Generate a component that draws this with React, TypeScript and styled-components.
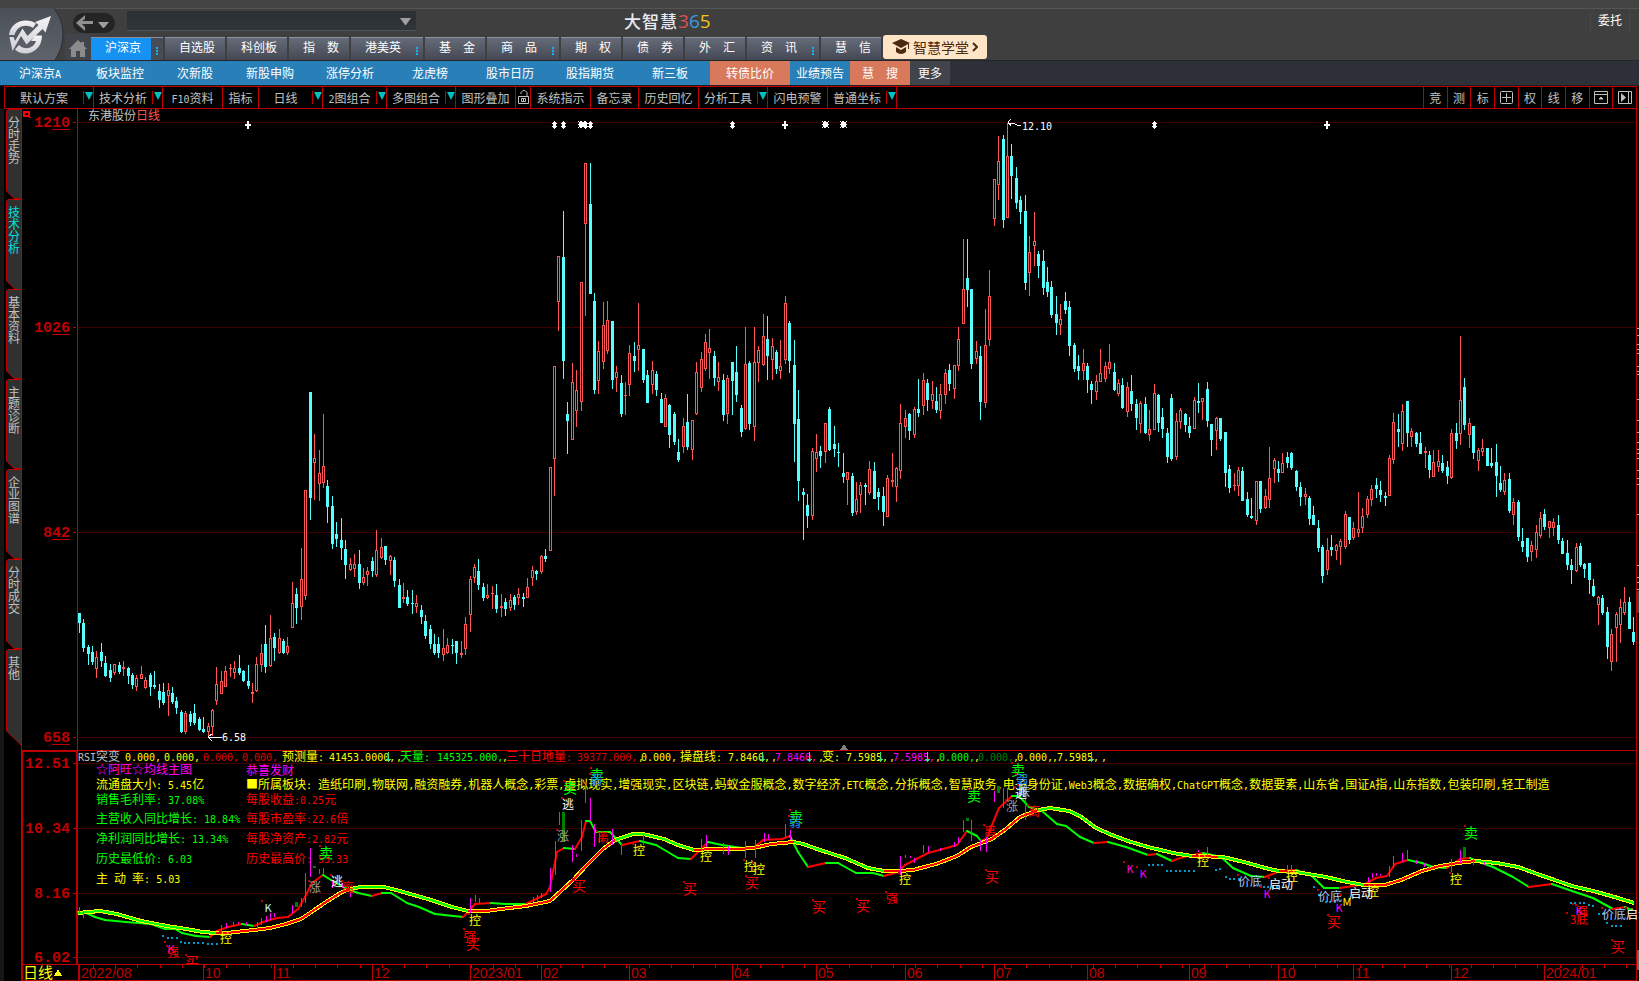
import React from "react";
import styled, { createGlobalStyle, css } from "styled-components";

const CJK = '"Noto Sans CJK SC", "Liberation Sans", sans-serif';
const MONO = '"DejaVu Sans Mono", monospace';
const RED = "#c00000";

const GlobalStyle = createGlobalStyle`
  *, *::after { box-sizing: border-box; }
  body { margin: 0; background: #000; font: 12px/16px ${CJK}; color: #fff; }
  button { font: inherit; color: inherit; background: none; border: 0; padding: 0; margin: 0; cursor: pointer; white-space: pre; }
  svg { display: block; }
`;

/* ---------- mixed Chinese / latin text ---------- */

const runs = (s: string) => s.match(/[\x20-\x7e]+|[^\x20-\x7e]+/g) || [];
const isLatin = (s: string) => /^[\x20-\x7e]/.test(s);

const Latin = styled.span`
  font: 10px/12px ${MONO};
`;

const Mixed = ({ children }: { children: string }) => (
  <span>{runs(children).map((r, i) => (isLatin(r) ? <Latin key={i}>{r}</Latin> : r))}</span>
);

const PlotText = styled.text`
  font: 12px ${CJK};
  white-space: pre;
  tspan.latin { font: 10px ${MONO}; }
`;

const Label = ({ x, y, fill, children }: { x: number; y: number; fill: string; children: string }) => (
  <PlotText x={x} y={y} fill={fill}>
    {runs(children).map((r, i) => (isLatin(r) ? <tspan className="latin" key={i}>{r}</tspan> : r))}
  </PlotText>
);

/* ---------- header ---------- */

const Page = styled.div`
  display: flex;
  flex-direction: column;
  min-height: 100vh;
`;

const Header = styled.header`
  display: flex;
  height: 61px;
  border-top: 8px solid #434343;
  border-bottom: 1px solid #232529;
  background: #3f3f3f;
  box-shadow: inset 0 1px #555;
`;

const Logo = styled.div`
  flex: none;
  width: 65px;
`;

const HeaderBody = styled.div`
  flex: 1;
  display: flex;
  flex-direction: column;
`;

const TitleRow = styled.div`
  display: flex;
  height: 26px;
  padding-left: 8px;
`;

const BackPill = styled.button`
  display: flex;
  width: 42px;
  height: 20px;
  margin: 5px 12px 0 0;
  border-radius: 10px;
  background: #242424;
`;

const CodeSelect = styled.select`
  appearance: none;
  width: 289px;
  height: 20px;
  margin-top: 3px;
  border: 0;
  border-bottom: 1px solid #4f565b;
  background: linear-gradient(#2b3034, #2f3438);
  color: #ddd;
`;

const SelectWrap = styled.div`
  position: relative;
  svg { position: absolute; right: 5px; top: 10px; pointer-events: none; }
`;

const Brand = styled.div`
  margin-left: 208px;
  padding-top: 1px;
  font: 500 17px/24px ${CJK};
  letter-spacing: 1px;
  color: #e6eaf2;
  span { font: 19px/24px "Open Sans", sans-serif; letter-spacing: 0; }
`;

const Digit = styled.span<{ $c: string }>`
  color: ${(p) => p.$c};
`;

const Entrust = styled.button`
  width: 40px;
  height: 24px;
  margin: 0 9px 0 auto;
  border: solid #484848;
  border-width: 0 1px;
`;

const TabRow = styled.nav`
  display: flex;
  align-items: flex-end;
  height: 26px;
  gap: 2px;
`;

const Home = styled.button`
  width: 26px;
  height: 26px;
  margin-right: -2px;
  background: #41454b;
`;

const Tab = styled.button<{ $more?: boolean; $active?: boolean }>`
  display: flex;
  align-items: center;
  justify-content: space-between;
  width: ${(p) => (p.$more ? 72 : 60)}px;
  height: 23px;
  padding: 0 5px 4px 14px;
  border-top: 1px solid #8b909c;
  background: ${(p) =>
    p.$active
      ? "linear-gradient(90deg, #1592f2 60px, #474c57 60px)"
      : "linear-gradient(#666b79, #434853)"};
`;

const Dots = styled.i`
  width: 2px;
  height: 8px;
  margin-top: 7px;
  background: repeating-linear-gradient(#12b4f5 0 2px, transparent 2px 3px);
`;

const School = styled.button`
  display: flex;
  align-items: center;
  gap: 3px;
  width: 104px;
  height: 24px;
  padding-left: 9px;
  margin-bottom: 1px;
  border-radius: 3px;
  background: #fde5c6;
  color: #4c2a12;
  font-size: 14px;
`;

/* ---------- blue navigation ---------- */

const SubNav = styled.nav`
  display: flex;
  height: 25px;
  background: #2d3036;
  border-bottom: 1px solid #1c1e22;
`;

type Tone = "blue" | "orange" | "grey";
const TONES: Record<Tone, string> = { blue: "#2980b9", orange: "#d9795b", grey: "#41454b" };

const SubLink = styled.a<{ $w: number; $tone: Tone }>`
  width: ${(p) => p.$w}px;
  line-height: 24px;
  text-align: center;
  text-decoration: none;
  white-space: pre;
  color: #fff;
  background: ${(p) => TONES[p.$tone]};
`;

/* ---------- toolbar ---------- */

const Toolbar = styled.div`
  display: flex;
  justify-content: space-between;
  height: 23px;
  margin-left: 4px;
  margin-right: 2px;
  border: 1px solid ${RED};
  background: #000;
  color: #c0c0c0;
`;

const ToolGroup = styled.div`
  display: flex;
`;

const Tool = styled.button<{ $w: number; $drop?: boolean }>`
  display: flex;
  align-items: center;
  justify-content: center;
  width: ${(p) => p.$w}px;
  border-right: 1px solid ${RED};
  ${(p) => p.$drop && css`
    > span { flex: 1; text-align: center; }
  `}
`;

const DropMark = styled.i`
  flex: none;
  width: 10px;
  height: 13px;
  border-left: 1px solid ${RED};
  &::after {
    content: "";
    display: block;
    width: 8px;
    margin: 1px 0 0 1px;
    border: solid transparent;
    border-width: 8px 4px 0;
    border-top-color: #00c0c0;
  }
`;

const QuickGroup = styled.div`
  display: flex;
  width: 213px;
  border-left: 1px solid ${RED};
`;

const Quick = styled.button`
  flex: 1;
  display: flex;
  align-items: center;
  justify-content: center;
  & + & { border-left: 1px solid ${RED}; }
`;

/* ---------- work area ---------- */

const Work = styled.main`
  display: flex;
`;

const Rail = styled.nav`
  flex: none;
  width: 22px;
  padding-left: 2px;
  border-left: 4px solid #161616;
  border-right: 1px solid ${RED};
`;

const RailTab = styled.button<{ $active?: boolean; $last?: boolean }>`
  position: relative;
  display: block;
  width: 15px;
  height: ${(p) => (p.$last ? 98 : 90)}px;
  color: ${(p) => (p.$active ? "#00e0e0" : "#c0c0c0")};
  svg { position: absolute; left: 0; top: 0; overflow: visible; }
`;

const RailText = styled.span`
  position: absolute;
  left: 2px;
  top: 7px;
  width: 12px;
  line-height: 12px;
  white-space: normal;
`;

const Charts = styled.div`
  flex: 1;
  min-width: 0;
  svg { width: 100%; height: auto; shape-rendering: crispEdges; }
`;

const ScaleText = styled.text`
  font: bold 15px "Liberation Mono", monospace;
  fill: ${RED};
  text-anchor: end;
`;

const DateText = styled.text`
  font: 14px "Liberation Sans", sans-serif;
  fill: ${RED};
`;

const Mark = styled.text<{ $size: number }>`
  font: ${(p) => p.$size}px ${CJK};
  text-anchor: middle;
`;

/* ---------- data ---------- */

const TABS: [string, boolean?][] = [
  ["沪深京", true], ["自选股"], ["科创板"], ["指　数"], ["港美英", true], ["基　金"], ["商　品", true],
  ["期　权"], ["债　券"], ["外　汇"], ["资　讯", true], ["慧　信"],
];

const LINKS: [string, number, Tone][] = [
  ["沪深京A", 80, "blue"], ["板块监控", 80, "blue"], ["次新股", 70, "blue"], ["新股申购", 80, "blue"],
  ["涨停分析", 80, "blue"], ["龙虎榜", 80, "blue"], ["股市日历", 80, "blue"], ["股指期货", 80, "blue"],
  ["新三板", 80, "blue"], ["转债比价", 80, "orange"], ["业绩预告", 60, "blue"], ["慧　搜", 60, "orange"],
  ["更多", 40, "grey"],
];

const TOOLS: [string, number, boolean?][] = [
  ["默认方案", 89, true], ["技术分析", 69, true], ["F10资料", 60], ["指标", 36], ["日线", 64, true],
  ["2图组合", 64, true], ["多图组合", 69, true], ["图形叠加", 60], ["lock", 15], ["系统指示", 60],
  ["备忘录", 48], ["历史回忆", 60], ["分析工具", 69, true], ["闪电预警", 60], ["普通坐标", 69, true],
];

const RAIL = ["分时走势", "技术分析", "基本资料", "主题诊断", "企业图谱", "分时成交", "其他"];

/* Candle tapes: colour (r up, c down), x, high, body top, body bottom, low, in thirds of a plot unit. */
const TAPES: { x: number; y: number; bars: string }[] = [
  {
    x: 70, y: 380,
    bars: `c28 699 699 729 759;c40 717 729 804 816;c55 795 801 822 855;c67 798 816 846 855;r79 813 831 867 894;c94 789 816 843 861;c106 828 849 888 891;c121 852 870 894 906;r133 852 852 879 885;c148 846 855 876 882;r160 843 861 867 888;c175 861 864 888 912;c187 879 885 915 927;r199 885 894 921 933;r214 858 882 897 897;r226 891 900 924 927;c241 879 885 921 948;c253 873 915 921 927;c268 912 933 960 984;c280 909 936 969 975;r295 909 930 948 1008;c307 921 939 966 972;c319 951 963 984 1002;c334 990 996 1056 1059;r346 993 999 1056 1062;c361 993 1002 1026 1038;c373 972 999 1029 1035;c388 1011 1017 1050 1053;c400 1011 1047 1056 1059;r415 1029 1038 1056 1072;r427 987 990 1041 1068;r439 861 912 963 975;r454 873 903 942 942;r466 858 873 921 921;r481 852 864 867 891;r493 843 864 879 897;c508 825 864 879 885;c520 870 873 903 906;c535 855 903 918 927;r547 909 936 942 969;r559 831 852 933 936;r574 792 819 855 876;c586 735 792 861 879;r601 705 774 858 861;c613 759 771 804 843;r628 747 774 819 822;c640 777 783 819 822;r652 771 798 819 825;r667 606 669 744 744;c679 624 642 684 732;r694 504 597 681 720;r706 330 330 648 660;c721 36 36 354 420;r733 162 234 249 360;r748 210 279 312 363;r760 102 258 309 324;c772 300 318 381 429;c787 348 378 492 507;c799 426 462 477 501;c814 414 480 504 540;c826 480 507 555 597;r841 534 552 570 573;r853 522 552 567 591;c868 510 552 609 627;r880 564 591 609 615;r892 561 573 585 618;c907 531 543 573 591;r919 450 510 585 591;r934 474 501 534 537;c946 498 498 540 555;r961 525 528 543 585;c973 531 540 603 621;c988 597 615 684 684;r1000 609 651 657 669;c1012 630 651 672 678;c1027 630 669 672 702;r1039 645 669 681 699;c1054 675 690 711 732;c1066 705 723 768 777;c1081 735 747 792 807;c1093 762 792 819 825;c1105 771 792 819 834;r1120 747 804 825 843;r1132 774 795 819 822;c1147 777 795 798 822;c1159 783 783 819 852;r1174 783 819 825 834;r1186 711 732 807 825;r1201 588 597 705 756;r1213 552 561 594 609;c1225 537 573 615 630;c1240 609 621 654 663;r1252 612 645 654 657;r1267 618 639 642 687;c1279 612 645 687 699;r1294 642 678 684 711;c1306 654 666 687 708;r1321 642 660 684 693;c1333 645 651 675 690;r1345 624 642 654 675;c1360 639 651 657 681;r1372 594 621 654 654;r1387 558 570 594 618;c1399 570 573 582 600;r1414 525 528 576 582;c1426 507 528 537 546`,
  },
  {
    x: 500, y: 110,
    bars: `r151 1072 1072 1322 1322;r163 768 768 1047 1158;r175 438 438 576 663;c190 303 441 753 807;c202 876 912 933 1032;r217 759 816 990 990;r229 780 840 903 951;r244 516 516 876 903;r256 159 159 342 618;c271 159 282 552 552;c283 549 573 840 852;r295 693 723 813 852;r310 576 645 756 777;r322 573 630 723 732;c337 633 633 810 837;r349 768 786 804 846;c364 795 819 912 921;r376 816 855 858 915;r388 705 729 825 858;c403 696 738 753 786;r415 579 705 720 783;c430 717 717 810 819;c442 780 795 879 879;r457 753 780 825 852;c469 783 792 840 858;c484 849 867 939 939;r496 852 864 951 951;c508 882 885 975 1014;c523 906 912 996 1005;c535 987 1026 1050 1056;r550 924 948 1011 1029;c562 852 936 1011 1020;r577 930 930 1020 1050;r589 756 786 912 915;r604 726 747 834 846;r616 672 696 777 783;r628 657 714 729 807;c643 723 738 804 828;r655 756 801 816 843;c670 792 810 915 933;r682 795 804 912 942;c697 756 756 813 915;c709 708 786 855 876;c724 885 894 966 981;r736 651 762 957 960;c748 753 759 942 960;r763 651 756 951 993;r775 708 720 759 816;r790 612 678 765 768;c802 618 687 738 810;r817 684 708 750 810;c829 720 726 777 792;r841 690 768 783 807;r856 558 579 750 762;c868 633 639 753 789;c883 690 765 942 1056;c895 840 927 1113 1173;c910 1134 1146 1155 1290;c922 1152 1185 1218 1254;r937 1014 1023 1218 1230;r949 972 1026 1047 1086;c961 1008 1023 1038 1074;r976 939 939 1026 1059;c988 891 897 1020 1023;c1003 948 1002 1017 1041;c1015 999 1026 1029 1071;c1030 1029 1089 1101 1119;r1042 1086 1086 1110 1185;c1057 1089 1098 1209 1218;r1069 1116 1167 1206 1215;r1081 1116 1125 1155 1209;c1096 1119 1125 1131 1185;r1108 1053 1077 1149 1155;c1123 1056 1083 1167 1167;c1135 1134 1146 1161 1200`,
  },
  {
    x: 880, y: 110,
    bars: `c10 1131 1158 1206 1248;r22 1095 1104 1221 1221;r37 1029 1110 1116 1131;r49 1071 1074 1131 1176;r61 882 939 1083 1107;r76 900 924 951 984;c88 909 912 963 990;r103 891 897 975 984;c115 807 897 909 921;r130 789 810 888 915;c142 807 819 870 903;r157 813 852 873 897;c169 831 873 900 909;r181 822 852 903 927;r196 777 789 855 882;c208 762 780 822 843;r223 765 765 837 867;r235 651 687 768 783;r250 387 537 642 642;c262 387 504 540 591;c274 537 537 762 777;r289 693 723 747 762;c301 708 738 876 930;r316 597 705 879 894;r328 480 558 690 708;r343 207 207 327 348;r355 78 153 225 270;c370 75 87 330 354;r382 38 138 324 324;c394 102 138 198 267;c409 171 204 279 297;c421 258 270 306 342;c436 255 303 519 540;r448 378 426 489 558;r463 306 393 408 468;c475 423 432 468 504;c490 420 453 534 555;c502 471 516 546 561;c514 513 531 615 624;c529 558 612 639 675;r541 582 627 645 675;c556 546 573 600 612;c568 573 591 708 738;c583 699 705 777 786;c595 735 768 783 810;r610 717 759 783 810;c622 759 768 810 849;c634 813 822 840 882;r649 795 813 846 870;r661 717 789 816 816;r676 756 768 807 816;r688 702 756 777 792;c703 759 786 840 843;r715 807 819 852 858;c727 804 825 894 897;r742 816 831 906 921;c754 795 843 882 903;c769 867 882 924 960;r781 873 879 942 969;c796 861 882 969 972;r808 900 957 975 993;r823 822 849 960 960;c835 852 855 939 966;c847 894 921 957 984;c862 954 969 1041 1059;c874 852 864 1047 1053;r889 909 933 1041 1050;r901 894 900 936 957;c916 909 912 945 966;c928 921 948 969 984;r943 861 870 957 957;c955 819 873 879 909;r967 864 864 876 930;c982 816 837 933 951;c994 942 942 990 1038;r1009 921 924 963 1020;c1021 924 924 987 993;c1036 966 966 1089 1131;c1048 1065 1077 1134 1149;r1063 1089 1125 1128 1143;r1075 1071 1080 1128 1158`,
  },
  {
    x: 1240, y: 320,
    bars: `c7 441 453 543 543;c22 516 537 585 591;c34 534 588 594 597;r49 483 483 603 615;c61 483 483 567 579;r76 507 528 564 567;r88 381 474 540 564;r103 414 420 447 489;c115 423 447 459 486;r127 399 429 459 459;c142 396 411 429 444;c154 396 399 444 450;c169 450 453 501 513;c181 486 501 531 558;r196 504 522 531 555;c208 528 534 597 615;c220 558 585 615 615;c235 600 624 684 696;c247 675 681 768 789;r262 654 690 750 765;c274 645 681 690 708;r289 672 675 693 720;r301 657 663 681 735;r316 573 582 681 687;c328 591 591 660 672;r340 606 624 654 660;r355 516 627 639 651;r367 564 588 624 639;r382 528 537 585 594;r394 495 507 540 558;c409 474 495 507 534;c421 483 510 525 546;c436 516 528 534 558;r448 405 414 528 528;r460 279 306 420 432;c475 282 327 336 381;r487 252 273 372 393;c502 243 243 339 381;r514 324 333 351 381;c529 336 339 372 381;c541 336 369 402 402;r556 381 393 399 444;c568 393 405 450 474;r580 390 426 471 471;r595 390 423 441 456;c607 405 429 453 459;c622 423 441 468 492;r634 327 339 474 477;c649 309 339 363 387;r661 48 240 342 375;c673 174 201 315 330;r688 294 309 345 384;c700 318 318 399 417;r715 384 390 423 453;r727 357 384 396 408;c742 384 384 438 438;c754 384 429 438 444;c769 372 426 468 531;c781 438 489 510 516;r793 459 480 516 525;c808 459 477 573 579;r820 534 546 585 615;c835 540 546 651 663;c847 624 663 681 696;c862 654 654 711 726;r874 663 675 696 723;r889 615 636 690 714;r901 576 594 648 654;c913 567 582 621 630;r928 603 603 624 654;r940 594 606 624 648;c955 585 615 660 672;c967 654 663 702 702;c982 660 699 735 750;c994 717 735 750 792;r1009 669 681 753 756;c1021 669 678 735 741;c1033 729 732 747 774;c1048 729 729 780 822;c1060 777 798 828 831;r1075 828 831 855 915;c1087 825 834 879 885;c1102 861 876 981 1017;r1114 927 942 1026 1053;r1129 876 882 924 1026;r1141 837 861 915 969;r1153 801 846 879 885;c1168 831 846 927 927;c1180 891 936 966 975`,
  },
];

const CANDLES = TAPES.flatMap((t) =>
  t.bars.split(";").map((s) => {
    const [x, high, top, bottom, low] = s.slice(1).split(" ").map(Number);
    const py = (v: number) => t.y + Math.round(v / 3);
    return { up: s[0] === "r", x: t.x + Math.floor(x / 3), high: py(high), top: py(top), bottom: py(bottom), low: py(low) };
  })
);

/* Slow average, colour-keyed stretches. */
const SLOW: [string, string][] = [
  ["#00ff00", "78,913 100,911 117,914 141,921 167,926 186,929 203,932 216,933"],
  ["#ff0000", "216,933 226,933 245,931 270,928 286,924 301,919 310,913 326,902 342,892 350,889"],
  ["#00ff00", "350,889 361,887 384,887 396,890 414,895 431,900 452,907 468,911"],
  ["#ff0000", "468,911 486,911 501,909 526,906 550,901 561,891 573,880 586,866 603,849 615,840"],
  ["#00ff00", "615,840 633,834 643,834 664,839 678,845 694,850"],
  ["#ff0000", "694,850 715,849 736,849 754,848 771,844 794,842"],
  ["#00ff00", "794,842 803,844 820,850 845,858 868,868 884,871"],
  ["#ff0000", "884,871 900,871 913,870 936,864 957,856 971,847 992,839 1006,829 1020,817 1038,810"],
  ["#00ff00", "1038,810 1050,808 1069,811 1080,816 1096,828 1112,835 1128,841 1148,847 1173,853 1192,856"],
  ["#ff0000", "1192,856 1203,856 1218,857"],
  ["#00ff00", "1218,857 1223,857 1244,862 1269,869 1279,871"],
  ["#ff0000", "1279,871 1296,872"],
  ["#00ff00", "1296,872 1308,874 1326,877 1347,882 1364,885"],
  ["#ff0000", "1364,885 1385,885 1401,880 1422,871 1440,866 1458,863 1475,861"],
  ["#00ff00", "1475,861 1497,863 1518,867 1543,876 1572,886 1597,892 1618,898 1634,903"],
];

const FAST = "78,912 84,912 95,917 105,920 126,922 151,924 165,929 175,929 182,933 196,936 210,937 217,931 228,927 242,924 254,926 263,922 277,918 288,917 298,909 305,897 312,883 323,875 331,880 345,888 358,893 372,896 382,893 391,893 407,903 419,907 435,914 463,917 468,912 475,904 491,903 505,904 526,904 542,896 546,894 550,887 557,852 564,848 575,849 582,837 586,821 590,821 596,832 610,832 622,845 640,841 656,845 678,858 691,859 700,850 708,842 722,845 742,848 752,849 763,840 782,839 790,836 798,852 808,867 826,863 838,863 856,873 873,873 884,876 898,872 905,865 928,853 943,849 957,845 967,831 977,836 981,841 987,838 992,825 999,808 1012,796 1019,796 1029,807 1042,811 1057,824 1066,826 1080,837 1094,843 1108,842 1126,847 1148,855 1157,854 1172,861 1183,857 1203,853 1221,857 1233,868 1251,876 1265,877 1280,871 1296,870 1312,876 1324,888 1340,888 1365,884 1376,878 1387,876 1395,864 1408,860 1422,863 1433,867 1447,868 1460,859 1470,858 1479,862 1493,867 1513,877 1529,887 1552,884 1572,891 1593,898 1613,909 1625,907 1631,910"
  .split(" ")
  .map((p) => p.split(",").map(Number));

/* x, top, bottom */
const STICKS = "79 907 913,83 911 918,221 925 932,226 923 928,257 922 929,261 918 925,266 916 922,270 913 920,274 913 917,292 905 913,301 898 907,305 873 903,310 848 877,319 869 874,323 868 874,332 880 888,342 883 888,350 892 897,470 898 913,475 895 902,479 898 903,537 895 902,541 893 898,550 868 892,555 841 875,559 812 825,572 845 862,576 854 857,581 820 851,585 785 803,590 798 821,594 824 847,599 832 843,612 829 845,621 846 855,643 835 845,701 839 850,706 835 847,723 843 854,728 846 855,745 841 858,755 840 858,764 833 842,768 834 840,785 824 837,790 830 840,900 856 875,914 858 863,923 845 853,928 846 852,954 842 847,958 837 843,963 820 832,971 820 841,980 840 851,986 837 852,994 791 802,1003 788 808,1007 788 800,1025 799 820,1207 847 857,1287 865 873,1291 865 873,1368 877 882,1372 873 878,1389 866 877,1393 856 868,1402 853 862,1407 850 860,1451 859 872,1460 850 863,1473 859 865,233 922 925,238 922 924,246 922 925,533 897 902,905 855 858,910 856 858,940 848 851,1376 873 876,1380 874 876,1198 850 852,1416 860 864,1424 863 867,1429 865 869,1484 862 865"
  .split(",")
  .map((s) => s.split(" ").map(Number));

/* x, top, height */
const BLOCKS = [[313, 866, 2], [295, 902, 5], [562, 812, 30], [966, 818, 3], [997, 786, 7], [1463, 847, 11]];

/* first x, y, count */
const DOTS = [
  [162, 935, 1], [167, 937, 3], [180, 941, 1], [184, 942, 5], [207, 943, 3], [1148, 864, 4], [1166, 870, 7],
  [1215, 869, 1], [1219, 868, 1], [1225, 876, 1], [1229, 878, 3], [1263, 886, 4], [1313, 886, 1], [1318, 894, 1],
  [1325, 901, 3], [1570, 902, 4], [1588, 904, 1], [1592, 905, 1], [1598, 913, 2], [1606, 922, 1], [1611, 925, 3],
];

const MAJOR: [number, string][] = [
  [79, "2022/08"], [203, "10"], [274, "11"], [372, "12"], [470, "2023/01"], [541, "02"], [629, "03"], [732, "04"],
  [816, "05"], [905, "06"], [994, "07"], [1087, "08"], [1189, "09"], [1278, "10"], [1353, "11"], [1451, "12"],
  [1544, "2024/01"],
];

const G = "#00ff00", R = "#ff0000", Y = "#ffff00", M = "#ff00ff", W = "#ffffff", B = "#1e90ff", S = "#a0a0a0", P = "#a6c8ff";
const D = "#e00000";

const MARKS: [string, number, number, string, number?][] = [
  ["卖", 326, 853, G, 14], ["涨", 315, 888, S], ["离", 348, 888, R], ["逃", 337, 882, W], ["K", 268, 908, "#c0ffff", 11],
  ["控", 226, 939, Y], ["K", 171, 949, M, 11], ["强", 173, 953, R], ["买", 192, 962, R, 14], ["控", 475, 921, Y],
  ["强", 470, 936, R, 13], ["买", 473, 944, R, 14], ["卖", 570, 788, G, 14], ["逃", 568, 805, W], ["涨", 563, 837, S],
  ["卖", 597, 775, G, 14], ["弱", 596, 781, B], ["离", 603, 838, R], ["控", 639, 851, Y], ["买", 579, 886, R, 14],
  ["控", 706, 857, Y], ["买", 690, 889, R, 14], ["控", 750, 867, Y], ["控", 759, 870, Y], ["买", 752, 883, R, 14],
  ["卖", 796, 817, G, 14], ["弱", 795, 823, B], ["买", 819, 907, R, 14], ["买", 863, 906, R, 14], ["强", 892, 899, R],
  ["控", 905, 880, Y], ["买", 992, 877, R, 14], ["离", 990, 832, R], ["卖", 974, 796, G, 14], ["卖", 1018, 770, G, 14],
  ["弱", 1022, 781, B], ["跌", 1024, 792, P], ["逃", 1021, 794, W], ["涨", 1012, 807, S], ["离", 1034, 812, R],
  ["K", 1130, 869, M, 11], ["K", 1143, 874, M, 11], ["控", 1203, 862, Y], ["价底", 1250, 882, P], ["控", 1292, 877, Y],
  ["启动", 1281, 885, W], ["K", 1267, 894, M, 11], ["价底", 1330, 897, P], ["K", 1339, 908, M, 11], ["M", 1347, 902, Y, 11],
  ["控", 1373, 892, Y], ["启动", 1361, 894, W], ["买", 1334, 922, R, 14], ["控", 1456, 880, Y], ["卖", 1471, 833, G, 14],
  ["强", 1582, 912, R], ["K", 1579, 911, M, 11], ["3底", 1579, 920, R], ["价底", 1614, 915, P], ["启动", 1638, 915, W],
  ["买", 1618, 947, R, 14],
];

const READOUT: [number, string, string][] = [
  [78, "#c0c0c0", "RSI突变"], [125, Y, "0.000,"], [164, Y, "0.000,"], [203, D, "0.000,"], [242, D, "0.000,"],
  [282, Y, "预测量:"], [329, Y, "41453.0000,"], [400, G, "天量:"], [437, G, "145325.000,"], [506, R, "三十日地量:"],
  [577, D, "39377.000,"], [641, Y, "0.000,"], [680, Y, "操盘线:"], [728, Y, "7.8460,"], [775, M, "7.8460,"],
  [822, Y, "变:"], [846, Y, "7.5985,"], [893, M, "7.5985,"], [939, G, "0.000,"], [978, "#008000", "0.000,"],
  [1017, Y, "0.000,"], [1057, Y, "7.5985,"],
];

const FACTS: [number, number, string, string][] = [
  [96, 774, M, "☆阿旺☆均线主图"], [246, 775, M, "恭喜发财"], [96, 789, Y, "流通盘大小: 5.45亿"],
  [246, 789, Y, "■所属板块: 造纸印刷,物联网,融资融券,机器人概念,彩票,虚拟现实,增强现实,区块链,蚂蚁金服概念,数字经济,ETC概念,分拆概念,智慧政务,电子身份证,Web3概念,数据确权,ChatGPT概念,数据要素,山东省,国证A指,山东指数,包装印刷,轻工制造"],
  [96, 804, G, "销售毛利率: 37.08%"], [246, 804, R, "每股收益:0.25元"],
  [96, 823, G, "主营收入同比增长: 18.84%"], [246, 823, R, "每股市盈率:22.6倍"],
  [96, 843, G, "净利润同比增长: 13.34%"], [246, 843, R, "每股净资产:2.82元"],
  [96, 863, G, "历史最低价: 6.03"], [246, 863, R, "历史最高价: 53.33"],
  [96, 883, Y, "主 动 率: 5.03"],
];

/* ---------- drawings ---------- */

const LogoMark = () => (
  <svg width="65" height="52" viewBox="0 8 65 52">
    <defs>
      <linearGradient id="plate" x1="0" y1="0" x2="0" y2="1">
        <stop offset="0" stopColor="#4b4f56" />
        <stop offset="1" stopColor="#5f636b" />
      </linearGradient>
      <linearGradient id="steel" x1="0" y1="0" x2="0" y2="1">
        <stop offset="0" stopColor="#f4f4f6" />
        <stop offset="1" stopColor="#cfcfd6" />
      </linearGradient>
    </defs>
    <path d="M0 8H54Q63 20 63 34T55 60H0Z" fill="url(#plate)" />
    <path d="M54 8Q63 20 63 34T55 60" fill="none" stroke="#2c2e32" strokeWidth="1" />
    <g fill="url(#steel)">
      <path d="M9 35C10 26 17 20.500 26 20.500C30 20.500 33 21.500 36 23.500L33 28C26 23.500 17 26 14.500 35Z" />
      <path d="M35 22L51 16L45.500 32.500L42.500 29L26.500 44.500L21 36L12.500 51L9.500 37H13.500L15 41L22.500 28.500L27.500 36L38.500 25Z" />
      <path d="M19 45C25 51 34 48 36 41H31L35 35.500H42C42 47 34 53.500 25.500 53.500C21 53.500 17.500 52 15 49.500Z" />
    </g>
  </svg>
);

const Shot = ({ kind, x }: { kind: "plus" | "gem" | "star"; x: number }) => (
  <path
    fill="#fff"
    d={
      kind === "plus"
        ? `M${x - 1} 121h2v3h2v2h-2v3h-2v-3h-2v-2h2z`
        : kind === "gem"
        ? `M${x} 121h1v1h1v1h1v1h-1v2h1v1h-1v1h-1v1h-1v-1h-1v-1h-1v-1h1v-2h-1v-1h1v-1h1z`
        : `M${x - 3} 121h1v1h1v-1h2v1h2v-1h1v1h-1v2h1v1h-1v2h1v1h-1v-1h-2v1h-2v-1h-1v1h-1v-1h1v-2h-1v-1h1v-2h-1z`
    }
  />
);

const SHOTS: ["plus" | "gem" | "star", number][] = [
  ["plus", 248], ["gem", 554], ["gem", 563], ["star", 581], ["gem", 585], ["gem", 590], ["gem", 732],
  ["plus", 785], ["star", 825], ["star", 843], ["gem", 1154], ["plus", 1327],
];

const SLIVERS = [328, 335, 344, 349, 353, 366, 371, 374, 399, 420, 432, 442, 449, 453, 458, 470, 478, 484, 514, 565, 577, 582, 589];

const PricePlot = () => (
  <svg viewBox="22 109 1617 641" role="img" aria-label="东港股份日线">
    {[122, 327, 532, 737].map((y) => (
      <g key={y}>
        <rect x="77" y={y} width="1559" height="1" fill="#400000" />
        <rect x="73" y={y} width="3" height="1" fill={RED} />
      </g>
    ))}
    <rect x="77" y="109" width="1" height="641" fill={RED} />
    <rect x="1636" y="109" width="1" height="641" fill={RED} />
    {[[122, "1210"], [327, "1026"], [532, "842"], [737, "658"]].map(([y, t]) => (
      <g key={t}>
        <ScaleText x="70" y={Number(y) + 5}>{t}</ScaleText>
        <rect x="52" y={Number(y) + 7} width="18" height="1" fill={RED} />
      </g>
    ))}
    <path d="M23 111h7v6h1v1h-2v-1h-6zM25 113v2h3v-2z" fill={R} fillRule="evenodd" />
    <Label x={88} y={120} fill="#c0c0c0">东港股份</Label>
    <Label x={136} y={120} fill="#ff5555">日线</Label>
    {CANDLES.map((c, i) =>
      c.up ? (
        <g key={i} fill="#ff5555">
          <rect x={c.x} y={c.high} width="1" height={Math.max(0, c.top - c.high)} />
          <rect x={c.x} y={c.bottom} width="1" height={Math.max(0, c.low - c.bottom)} />
          <rect x={c.x - 1} y={c.top} width="3" height={Math.max(1, c.bottom - c.top)} />
          {c.bottom - c.top > 2 && <rect x={c.x} y={c.top + 1} width="1" height={c.bottom - c.top - 2} fill="#000" />}
        </g>
      ) : (
        <g key={i} fill="#55ffff">
          <rect x={c.x} y={c.high} width="1" height={c.low - c.high} />
          <rect x={c.x - 1} y={c.top} width="3" height={Math.max(1, c.bottom - c.top)} />
        </g>
      )
    )}
    {SHOTS.map(([k, x]) => <Shot key={x} kind={k} x={x} />)}
    <path d="M1011 119L1008 122L1011 126M1008 123L1013 123L1017 125H1021" fill="none" stroke="#fff" />
    <Label x={1022} y={130} fill="#fff">12.10</Label>
    <path d="M212 734L208 737L212 741M208 737.500H222" fill="none" stroke="#fff" />
    <Label x={222} y={741} fill="#fff">6.58</Label>
    <path d="M840 750L844 744L848 750Z" fill="#808080" />
    {SLIVERS.map((y) => <rect key={y} x="1637" y={y} width="2" height="1" fill="#aaa" />)}
    <rect x="1637" y="591" width="2" height="22" fill="#444" />
  </svg>
);

const Arrow = ({ x }: { x: number }) => (
  <path d={`M${x} 752h1v7h2l-2 3h-1l-2-3h2z`} fill="#40e080" />
);

const IndicatorPlot = () => (
  <svg viewBox="22 750 1617 214" role="img" aria-label="RSI突变">
    {[763, 828, 893, 957].map((y) => (
      <g key={y}>
        <rect x="77" y={y} width="1559" height="1" fill="#400000" />
        <rect x="73" y={y} width="4" height="1" fill={RED} />
      </g>
    ))}
    <rect x="22" y="750" width="1615" height="1" fill={RED} />
    <rect x="22" y="751" width="55" height="1" fill={RED} />
    <rect x="22" y="751" width="1" height="213" fill={RED} />
    <rect x="76" y="751" width="2" height="213" fill={RED} />
    <rect x="1636" y="750" width="1" height="214" fill={RED} />
    <rect x="1637" y="950" width="2" height="14" fill="#666" />
    {[[763, "12.51"], [828, "10.34"], [893, "8.16"], [957, "6.02"]].map(([y, t]) => (
      <ScaleText key={t} x="70" y={Number(y) + 5}>{t}</ScaleText>
    ))}
    {READOUT.map(([x, c, t]) => <Label key={x} x={x} y={761} fill={c}>{t}</Label>)}
    {[396, 502, 638, 771, 818, 889, 935, 974, 1013, 1052, 1101].map((x) => <Label key={x} x={x} y={761} fill={Y}>,</Label>)}
    {[388, 762, 809, 880, 927, 1091].map((x) => <Arrow key={x} x={x} />)}
    {FACTS.map(([x, y, c, t]) => <Label key={t} x={x} y={y} fill={c}>{t}</Label>)}
    {BLOCKS.map(([x, y, h]) => <rect key={x} x={x} y={y} width="3" height={h} fill="#008000" />)}
    <g shapeRendering="geometricPrecision">
      {FAST.slice(1).map((p, i) => (
        <polyline key={i} points={`${FAST[i]} ${p}`} fill="none" strokeWidth="2" strokeLinecap="round" stroke={p[1] < FAST[i][1] ? R : G} />
      ))}
    </g>
    {SLOW.map(([, pts], i) => <polyline key={i} points={pts} fill="none" stroke={Y} strokeWidth="4" />)}
    {SLOW.map(([c, pts], i) => <polyline key={i} points={pts} fill="none" stroke={c} strokeWidth="2" />)}
    {STICKS.map(([x, a, b]) => <rect key={x} x={x} y={a} width="1" height={b - a} fill={M} />)}
    {DOTS.flatMap(([x, y, n]) =>
      Array.from({ length: n }, (_, i) => (
        <rect key={`${x}-${i}`} x={x + Math.round((i * 40) / 9)} y={y} width="2" height="2" fill="#0099cc" />
      ))
    )}
    {MARKS.map(([t, x, y, c, size = 12], i) => (
      <g key={i}>
        <rect x={x - 7 - (t.length - 1) * 6} y={y - 8} width="2" height="2" fill={RED} />
        <Mark $size={size} x={x} y={y + Math.round(size * 0.36)} fill={c}>{t}</Mark>
      </g>
    ))}
  </svg>
);

const MINOR = Array.from({ length: 70 }, (_, i) => 93 + Math.round((i * 200) / 9));

const TimeAxis = () => (
  <svg viewBox="22 964 1617 17" role="img" aria-label="日期">
    <path d="M22 964.500H1637M22 980.500H1637M22.500 964V981M78.500 964V981M1636.500 964V981" stroke={RED} fill="none" />
    {MINOR.map((x) => <rect key={x} x={x} y="965" width="1" height="3" fill={RED} />)}
    {MAJOR.map(([x, t]) => (
      <g key={x}>
        <rect x={x} y="964" width="1" height="17" fill={RED} />
        <DateText x={x + 2} y="978">{t}</DateText>
      </g>
    ))}
    <text x="23" y="978" fill={Y} fontFamily="Noto Sans CJK SC" fontSize="15">日线</text>
    <path d="M54 976L58 969L62 976Z" fill={Y} />
    <rect x="1637" y="964" width="2" height="6" fill="#666" />
  </svg>
);

const LockIcon = () => (
  <svg width="11" height="15" viewBox="0 0 11 15" fill="none" stroke="#c0c0c0">
    <path d="M3 4V2.500L5 .5H7L9 2.500V6M.5 6.500H10.500V13.500H.5ZM3.500 8.500H7.500V11.500H3.500ZM5.500 9V11" />
  </svg>
);

export default function App() {
  return (
    <Page>
      <GlobalStyle />
      <Header>
        <Logo><LogoMark /></Logo>
        <HeaderBody>
          <TitleRow>
            <BackPill aria-label="后退">
              <svg width="42" height="20" viewBox="0 0 42 20">
                <path d="M12 2L3 10L12 18V14L9 11H20V8H9L12 6Z" fill="#909090" />
                <path d="M25 9H36L31 15H30Z" fill="#a0a0a0" />
              </svg>
            </BackPill>
            <SelectWrap>
              <CodeSelect aria-label="代码"><option></option></CodeSelect>
              <svg width="11" height="8" viewBox="0 0 11 8"><path d="M0 0H11L6 7H5Z" fill="#a0a0a0" /></svg>
            </SelectWrap>
            <Brand>大智慧<Digit $c="#d9534f">3</Digit><Digit $c="#3a9be0">6</Digit><Digit $c="#f0c419">5</Digit></Brand>
            <Entrust>委托</Entrust>
          </TitleRow>
          <TabRow>
            <Home aria-label="首页">
              <svg width="26" height="26" viewBox="0 0 26 26">
                <path d="M13 6L16 9V8H19V12L22 15H20V23H15V17H11V23H6V15H4Z" fill="#8b8b8b" />
              </svg>
            </Home>
            {TABS.map(([t, more], i) => (
              <Tab key={t} $more={more} $active={i === 0}>{t}{more && <Dots />}</Tab>
            ))}
            <School>
              <svg width="18" height="16" viewBox="0 0 18 16" fill="#4c2a12">
                <path d="M9 0L18 4L9 9L0 4ZM4 8L9 11L14 8V13Q9 17 4 13ZM16 5H17V10H16Z" />
              </svg>
              智慧学堂
              <svg width="6" height="10" viewBox="0 0 6 10" fill="none" stroke="#4c2a12" strokeWidth="2"><path d="M1 1L5 5L1 9" /></svg>
            </School>
          </TabRow>
        </HeaderBody>
      </Header>
      <SubNav>
        {LINKS.map(([t, w, tone]) => (
          <SubLink key={t} href="#" $w={w} $tone={tone}><Mixed>{t}</Mixed></SubLink>
        ))}
      </SubNav>
      <Toolbar>
        <ToolGroup>
          {TOOLS.map(([t, w, drop]) =>
            t === "lock" ? (
              <Tool key={t} $w={w} aria-label="锁定"><LockIcon /></Tool>
            ) : (
              <Tool key={t} $w={w} $drop={drop}><Mixed>{t}</Mixed>{drop && <DropMark />}</Tool>
            )
          )}
        </ToolGroup>
        <QuickGroup>
          <Quick>竞</Quick>
          <Quick>测</Quick>
          <Quick>标</Quick>
          <Quick aria-label="多格">
            <svg width="13" height="13" viewBox="0 0 13 13" fill="none" stroke="#c0c0c0"><rect x=".5" y=".5" width="12" height="12" rx="1" /><path d="M6.500 2V11M2 6.500H11" /></svg>
          </Quick>
          <Quick>权</Quick>
          <Quick>线</Quick>
          <Quick>移</Quick>
          <Quick aria-label="展开">
            <svg width="14" height="13" viewBox="0 0 14 13" fill="none" stroke="#c0c0c0"><path d="M.5 .5H13.500V12.500H.5ZM0 3.500H14" /><path d="M5 8L7 6L9 8Z" fill="#c0c0c0" /></svg>
          </Quick>
          <Quick aria-label="侧栏">
            <svg width="14" height="13" viewBox="0 0 14 13" fill="none" stroke="#c0c0c0"><path d="M.5 .5H13.500V12.500H.5ZM10.500 0V13" /><path d="M3 2V11L8 6.500Z" fill="#c0c0c0" stroke="none" /></svg>
          </Quick>
        </QuickGroup>
      </Toolbar>
      <Work>
        <Rail>
          {RAIL.map((t, i) => (
            <RailTab key={t} $active={i === 1} $last={i === 6}>
              <svg width="15" height="98" viewBox="0 0 15 98">
                <path
                  d={i === 1 || i === 6 ? "M15 .5H2L.5 2V82L15 96" : "M15 .5H2L.5 2V82L8 89.500H15"}
                  fill="#303030"
                  stroke={RED}
                />
              </svg>
              <RailText>{t}</RailText>
            </RailTab>
          ))}
        </Rail>
        <Charts>
          <PricePlot />
          <IndicatorPlot />
          <TimeAxis />
        </Charts>
      </Work>
    </Page>
  );
}
